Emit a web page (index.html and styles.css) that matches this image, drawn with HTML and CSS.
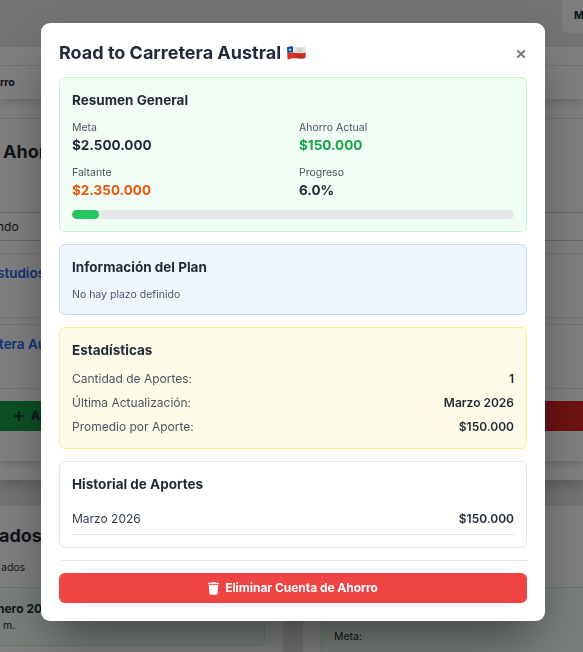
FILE: index.html
```html
<!DOCTYPE html>
<html lang="es">
<head>
<meta charset="utf-8">
<title>Cuentas de Ahorro</title>
<link rel="stylesheet" href="styles.css">
</head>
<body>
<div class="page">
  <header class="topbar"><div class="month">M</div></header>
  <main class="sheet">
    <nav class="tabs">rro</nav>
    <section class="accounts">
      <h1>Ahorro</h1>
      <div class="field">ndo</div>
      <div class="account first">studios</div>
      <div class="account second">tera Austral</div>
      <div class="actions">
        <div class="add"><svg width="10" height="10" viewBox="0 0 10 10"><path d="M5 0v10M0 5h10" stroke="currentColor" stroke-width="1.5"/></svg>Agregar</div>
        <div class="remove"></div>
      </div>
    </section>
  </main>
  <div class="columns">
    <section class="column left">
      <h2>ados</h2>
      <p>ados</p>
      <div class="entry"><b>nero 2026</b><span>m.</span></div>
    </section>
    <section class="column right">
      <div class="entry goal"><span>Meta:</span></div>
    </section>
  </div>
</div>

<div class="overlay">
  <div class="modal">
    <div class="modal-head">
      <h2>Road to Carretera Austral</h2>
      <svg class="flag" width="19" height="15" viewBox="0 0 19 15">
        <defs><linearGradient id="fold"><stop offset="0" stop-opacity=".06"/><stop offset=".3" stop-opacity="0"/><stop offset=".65" stop-opacity=".16"/><stop offset="1" stop-opacity=".04"/></linearGradient></defs>
        <path d="M0 1.3C4-.5 8 .5 11 1.2S16 1.6 18.8.6L18.6 12C15 13.3 12 12.5 9.500 12.3S4 12.300.6 13.800Z" fill="#f4f4f4"/>
        <path d="M.3 7.400C4 5.800 7 6.500 10 7S15.500 7.500 18.700 6.400L18.600 12C15 13.300 12 12.500 9.500 12.300S4 12.300.6 13.800Z" fill="#dc3528"/>
        <path d="M0 1.300C2 .4 4 .2 6 .3V6.300C4 6.200 2 6.700.3 7.400Z" fill="#1650a8"/>
        <path d="M3 2.100l.4 1.100h1.100l-.9.7.3 1.100-.9-.6-.9.600.3-1.100-.9-.700h1.200z" fill="#fff"/>
        <path d="M0 1.300C4-.5 8 .5 11 1.200S16 1.600 18.800.6L18.600 12C15 13.300 12 12.500 9.500 12.300S4 12.300.6 13.800Z" fill="url(#fold)"/>
      </svg>
      <svg class="close" width="10" height="10" viewBox="0 0 10 10"><path d="M1.300 1.300l7.400 7.400M8.700 1.300L1.300 8.700" stroke="currentColor" stroke-width="1.900"/></svg>
    </div>

    <section class="card green">
      <h3>Resumen General</h3>
      <div class="grid">
        <div><small>Meta</small><strong>$2.500.000</strong></div>
        <div><small>Ahorro Actual</small><strong class="ok">$150.000</strong></div>
        <div><small>Faltante</small><strong class="warn">$2.350.000</strong></div>
        <div><small>Progreso</small><strong>6.0%</strong></div>
      </div>
      <div class="bar"><div class="fill" style="width:6%"></div></div>
    </section>

    <section class="card blue">
      <h3>Información del Plan</h3>
      <small>No hay plazo definido</small>
    </section>

    <section class="card yellow">
      <h3>Estadísticas</h3>
      <div class="rows">
        <div class="row"><span>Cantidad de Aportes:</span><b>1</b></div>
        <div class="row"><span>Última Actualización:</span><b>Marzo 2026</b></div>
        <div class="row"><span>Promedio por Aporte:</span><b>$150.000</b></div>
      </div>
    </section>

    <section class="card plain">
      <h3>Historial de Aportes</h3>
      <div class="row lined"><span>Marzo 2026</span><b>$150.000</b></div>
    </section>

    <div class="modal-foot">
      <button class="delete">
        <svg width="11" height="13" viewBox="0 0 11 13" fill="currentColor"><path d="M3.300.8 3.800 0h3.400l.5.8h2.800q.5 0 .5.500v.900H0v-.9Q0 .8.500.8Z" opacity=".85"/><path d="M.8 3h9.400l-.6 8.600Q9.500 12.700 8.400 12.700H2.600Q1.500 12.700 1.400 11.600Z"/></svg>
        <span>Eliminar Cuenta de Ahorro</span>
      </button>
    </div>
  </div>
</div>
</body>
</html>
```
FILE: styles.css
```css
* { box-sizing: border-box; }
html, body { height: 100%; }
body { margin: 0; overflow: hidden; font: 12px/18px Inter, "Liberation Sans", sans-serif; color: #1f2937; }
h1, h2, h3, p { margin: 0; }

/* page behind the dialog */
.page { height: 652px; overflow: hidden; background: #e5e7eb; }
.topbar { height: 47px; display: flex; justify-content: flex-end; align-items: flex-start; }
.month { width: 21px; height: 33px; padding: 7px 0 0 12px; background: #f9fafb; border-radius: 0 0 0 5px; font-size: 10.5px; font-weight: 700; }
.sheet { height: 433px; padding-top: 18px; background: #fff; box-shadow: 0 6px 10px rgba(0,0,0,.16); }
.tabs { height: 34px; padding-top: 8px; border-top: 1px solid #e5e7eb; box-shadow: 0 4px 6px rgba(0,0,0,.13); font-size: 10.5px; font-weight: 700; }
.accounts { height: 343px; margin-top: 19px; border-top: 1px solid #e5e7eb; box-shadow: 0 4px 6px rgba(0,0,0,.12); }
.accounts h1 { height: 93px; padding: 21px 0 0 3px; font-size: 18px; line-height: 24px; }
.field { height: 29px; padding-top: 5px; border: solid #c9ccd3; border-width: 1px 0; text-indent: -3px; }
.account { height: 65px; margin-top: 12px; padding-top: 9px; border: solid #e5e7eb; border-width: 1px 0; color: #2563eb; font-size: 13.5px; font-weight: 600; line-height: 21px; white-space: nowrap; }
.account.first { text-indent: -3px; }
.account.second { margin-top: 6px; text-indent: -1px; }
.actions { height: 30px; margin-top: 12px; display: flex; }
.add, .remove { flex: 1; }
.add { display: flex; align-items: center; gap: 7px; padding-left: 14px; background: linear-gradient(90deg, #16a34a, #15803d); font-weight: 700; }
.remove { background: #dc2626; }
.columns { height: 146px; margin-top: 26px; display: flex; gap: 20px; }
.column { background: #fff; }
.left { width: 283px; padding-top: 18px; }
.left h2 { font-size: 18px; line-height: 24px; text-indent: -1px; }
.left p { margin: 12px 0 0 1px; font-size: 10.5px; line-height: 15px; }
.entry { background: #f0fdf4; border: 1px solid #bbf7d0; }
.left .entry { width: 265px; height: 59px; margin-top: 12px; padding: 12px 0 0; border-left: 0; border-radius: 0 6px 6px 0; }
.entry b, .entry span { display: block; }
.entry b { text-indent: -3px; }
.entry span { padding-left: 3px; font-size: 10.5px; line-height: 15px; }
.right { flex: 1; padding: 81px 0 0 18px; }
.goal { height: 80px; padding: 41px 0 0 12px; border-right: 0; border-radius: 6px 0 0 6px; }
.goal span { padding-left: 0; }

/* dialog */
.overlay { position: fixed; inset: 0; padding: 23px 0 0 41px; background: rgba(0,0,0,.5); }
.modal { width: 504px; height: 598px; padding: 18px; background: #fff; border-radius: 9px; box-shadow: 0 25px 50px -12px rgba(0,0,0,.5); }
.modal-head { height: 24px; margin-bottom: 12px; display: flex; align-items: center; }
.modal-head h2 { font-size: 18px; line-height: 24px; font-weight: 700; }
.flag { margin-left: 6px; }
.close { margin: 2px 1px 0 auto; color: #6b7280; }
.card { margin-bottom: 12px; padding: 12px; border: 1px solid; border-radius: 6px; }
.card h3 { margin-bottom: 9px; font-size: 13.5px; line-height: 21px; font-weight: 700; }
.green { background: #f0fdf4; border-color: #bbf7d0; }
.blue { background: #eff6ff; border-color: #bfdbfe; }
.yellow { background: #fefce8; border-color: #fef08a; }
.plain { border-color: #e5e7eb; }
small { display: block; font-size: 10.5px; line-height: 15px; color: #4b5563; }
.grid { display: grid; grid-template-columns: 1fr 1fr; gap: 9px 12px; }
.grid strong { display: block; font-size: 13.5px; line-height: 21px; font-weight: 700; }
.grid .ok { color: #16a34a; }
.grid .warn { color: #ea580c; }
.bar { height: 9px; margin-top: 9px; overflow: hidden; border-radius: 5px; background: #e5e7eb; }
.fill { height: 9px; border-radius: 5px; background: #22c55e; }
.rows { display: grid; gap: 6px; }
.row { display: flex; justify-content: space-between; }
.row span { color: #4b5563; }
.row b { font-weight: 600; }
.lined { padding: 6px 0; border-bottom: 1px solid #e5e7eb; }
.lined span { color: #374151; }
.modal-foot { padding-top: 12px; border-top: 1px solid #e5e7eb; }
.delete { width: 100%; height: 30px; padding: 0; display: flex; align-items: center; justify-content: center; gap: 6px; border: 0; border-radius: 6px; background: #ef4444; color: #fff; font: 700 12px/18px Inter, "Liberation Sans", sans-serif; letter-spacing: -.04px; }
```
